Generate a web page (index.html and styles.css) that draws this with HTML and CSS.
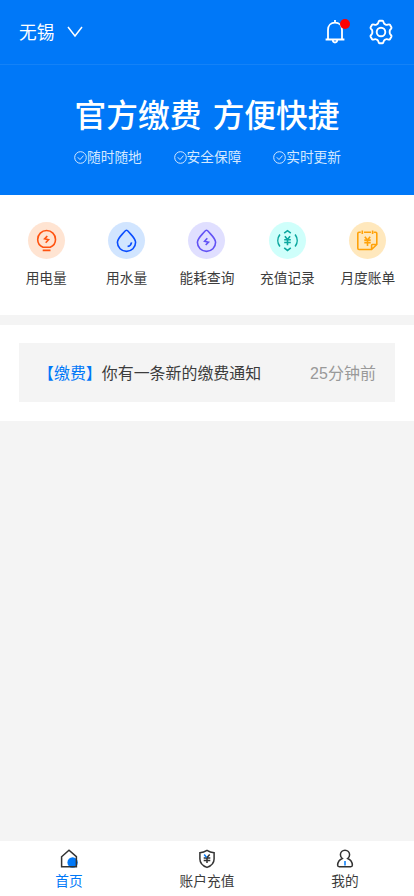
FILE: index.html
```html
<!DOCTYPE html>
<html lang="zh-CN">
<head>
<meta charset="utf-8">
<meta name="viewport" content="width=device-width, initial-scale=1">
<title>首页</title>
<link rel="stylesheet" href="styles.css">
</head>
<body>
<div class="page">
  <header class="topbar">
    <div class="city">无锡
      <svg class="chevron" width="16" height="12" viewBox="0 0 16 12"><path d="M1 1l7 9 7-9"/></svg>
    </div>
    <div class="actions">
      <div class="bell">
        <svg width="20" height="26" viewBox="0 0 20 26"><path d="M10 1v3M3 20.400V11c0-4.500 3-7.300 7-7.300s7 2.800 7 7.300v9.400M.6 20.500h18.800M7.700 21c.2 1.800 1 2.500 2.300 2.500s2.100-.7 2.300-2.500"/></svg>
        <span class="dot"></span>
      </div>
      <svg class="gear" width="24" height="26" viewBox="0 0 24 26"><path d="M8.600 4.900C9.500 4.500 9.400 1.700 10.500 1.700h3c1.100 0 1 2.800 1.900 3.200l1.500.9c.9.600 3.200-1.100 3.900-.2l1.700 2.900c.6 1.100-1.900 2.200-1.800 3.400v2.200c-.1 1.200 2.400 2.300 1.800 3.400l-1.700 2.900c-.7.900-3-.8-3.900-.2l-1.500.9c-.9.400-.8 3.200-1.900 3.200h-3c-1.100 0-1-2.800-1.900-3.200l-1.500-.9c-.9-.6-3.200 1.100-3.900.2l-1.700-2.900c-.6-1.100 1.900-2.200 1.800-3.400v-2.200c.1-1.200-2.400-2.300-1.800-3.400l1.700-2.900c.7-.9 3 .8 3.900.2z"/><circle cx="12" cy="13" r="4.300"/></svg>
    </div>
  </header>

  <section class="banner">
    <h1>官方缴费 方便快捷</h1>
    <ul class="features">
      <li><svg width="13" height="13" viewBox="0 0 13 13"><circle cx="6.500" cy="6.500" r="5.800"/><path d="M3.800 6.300l2.200 2.300 3.500-4"/></svg>随时随地</li>
      <li><svg width="13" height="13" viewBox="0 0 13 13"><circle cx="6.500" cy="6.500" r="5.800"/><path d="M3.800 6.300l2.200 2.300 3.500-4"/></svg>安全保障</li>
      <li><svg width="13" height="13" viewBox="0 0 13 13"><circle cx="6.500" cy="6.500" r="5.800"/><path d="M3.800 6.300l2.200 2.300 3.500-4"/></svg>实时更新</li>
    </ul>
  </section>

  <nav class="menu">
    <a class="item"><span class="disc power"><svg width="37" height="37" viewBox="0 0 37 37"><path d="M15 25.200c-3.200-1.400-5.300-4.200-5.300-7.800a8.900 8.900 0 0 1 17.800 0c0 3.600-2.100 6.400-5.300 7.800zM14.700 28.400h7.800"/><path d="M19.300 14l-2.700 2.900 3.900.9-2.800 2.900"/></svg></span>用电量</a>
    <a class="item"><span class="disc water"><svg width="37" height="37" viewBox="0 0 37 37"><path d="M18.500 8.300c.7 0 1.400.6 2.100 1.500 3.400 3.900 7 6.800 7 10.500a9.100 9.100 0 0 1-18.200 0c0-3.700 3.600-6.600 7-10.500.7-.9 1.400-1.500 2.100-1.500zM23.600 20.300c-.4 2.300-1.700 3.700-4 4.300"/></svg></span>用水量</a>
    <a class="item"><span class="disc usage"><svg width="37" height="37" viewBox="0 0 37 37"><path d="M18.500 8.300c.7 0 1.400.6 2.100 1.500 3.400 3.900 7 6.800 7 10.500a9.100 9.100 0 0 1-18.200 0c0-3.700 3.600-6.600 7-10.500.7-.9 1.400-1.500 2.100-1.500z"/><path d="M19.300 16.300l-2.700 2.900 3.900.9-2.800 2.900"/></svg></span>能耗查询</a>
    <a class="item"><span class="disc record"><svg width="37" height="37" viewBox="0 0 37 37"><path d="M10.900 12.500c-2.700 3.600-2.700 8.500 0 12.100M26.100 12.500c2.700 3.600 2.700 8.500 0 12.100M15.200 11.200l3.300-2.500 3.300 2.500M15.200 25.900l3.300 2.500 3.300-2.500"/><path d="M15.900 14.300l2.600 3.200 2.600-3.200M15.200 17.700h6.600M15.200 20.500h6.600M18.500 17.500v5.800"/></svg></span>充值记录</a>
    <a class="item"><span class="disc bill"><svg width="37" height="37" viewBox="0 0 37 37"><path d="M11.800 10.300H10c-.8 0-1.200.4-1.200 1.200v14.800c0 .8.4 1.200 1.200 1.200h12.600l5.200-5V11.500c0-.8-.4-1.200-1.200-1.200h-1.800M15 10.300h7M13.300 8.500v3.600M23.600 8.500v3.600M22.600 27.500v-4.300c0-.5.200-.7.700-.7h4.500"/><path d="M15.800 14.700l2.700 3.200 2.700-3.200M15.300 18.100h6.400M15.300 20.600h6.400M18.500 17.900v6"/></svg></span>月度账单</a>
  </nav>

  <section class="notices">
    <div class="notice">
      <p><span class="tag">【缴费】</span>你有一条新的缴费通知</p>
      <time>25分钟前</time>
    </div>
  </section>

  <nav class="tabs">
    <a class="tab active"><svg width="20" height="20" viewBox="0 0 20 20"><circle class="blue" cx="13.600" cy="13.500" r="5.200"/><path d="M2.600 7.700L10 1.300l7.400 6.400v10H2.600z"/></svg>首页</a>
    <a class="tab"><svg width="20" height="20" viewBox="0 0 20 20"><path d="M10 1.300c2.300 1.400 4.500 2.100 7.100 2.400v6.200c0 4-3.200 7-7.100 8.500-3.900-1.500-7.100-4.500-7.100-8.500V3.700C5.500 3.400 7.700 2.700 10 1.300z"/><path d="M10 8.500l2.700-2.900M6.700 9h6.600M6.700 11.600h6.600M10 8.800v5.300"/><path class="accent" d="M7.200 5.600L9.600 8.400"/></svg>账户充值</a>
    <a class="tab"><svg width="20" height="20" viewBox="0 0 20 20"><path d="M7.300 9.500A4.600 4.600 0 0 1 5.400 5.800a4.600 4.600 0 0 1 9.200 0 4.600 4.600 0 0 1-1.900 3.700c2.800 1.200 4.500 3.500 4.700 6.600 0 1.200-.5 1.700-1.600 1.700H4.200c-1.100 0-1.600-.5-1.600-1.700.2-3.100 1.900-5.400 4.700-6.600z"/><path class="accent" d="M10 12v4.400"/></svg>我的</a>
  </nav>
</div>
</body>
</html>
```
FILE: styles.css
```css
* { box-sizing: border-box; }
body {
  margin: 0;
  font-family: "Liberation Sans", "Noto Sans CJK SC", sans-serif;
  color: #3c3c3c;
  background: #f4f4f4;
}
svg { display: block; fill: none; stroke: currentColor; flex: none; }
h1, p, ul { margin: 0; padding: 0; }
.page { min-height: 100vh; display: flex; flex-direction: column; }

.topbar {
  height: 65px;
  padding: 0 21px 0 19px;
  display: flex;
  align-items: center;
  justify-content: space-between;
  background: #0078f8;
  border-bottom: 1px solid #1482f7;
  color: #fff;
}
.city { display: flex; align-items: center; gap: 13px; padding-top: 2px; font-size: 17.700px; line-height: 26px; }
.chevron { stroke-width: 1.500; margin-top: -2px; }
.actions { display: flex; align-items: center; gap: 24px; }
.bell { position: relative; stroke-width: 1.800; }
.gear { stroke-width: 1.900; }
.dot {
  position: absolute;
  top: 0;
  right: -5px;
  width: 10px;
  height: 10px;
  border-radius: 50%;
  background: #f00;
}

.banner {
  height: 129.500px;
  padding-top: 27px;
  background: #0078f8;
  color: #fff;
}
h1 { font-size: 31.700px; line-height: 48px; font-weight: 500; text-align: center; word-spacing: 2.500px; }
.features {
  list-style: none;
  display: flex;
  justify-content: space-between;
  padding: 8px 73px 0 74px;
  font-size: 13.700px;
  line-height: 20px;
  color: #d4e8ff;
}
.features li { display: flex; align-items: center; }
.features svg { stroke-width: 1; margin-top: -1px; }

.menu {
  height: 120.500px;
  padding: 27px 6px 0;
  display: grid;
  grid-template-columns: repeat(5, 1fr);
  background: #fff;
}
.item { display: flex; flex-direction: column; align-items: center; gap: 10px; font-size: 13.700px; line-height: 20px; white-space: nowrap; }
.disc { width: 37px; height: 37px; border-radius: 50%; stroke-width: 1.600; }
.power { background: #ffe4d2; color: #ff5310; }
.water { background: #d1e5ff; color: #0a4dff; }
.usage { background: #e0dfff; color: #6252f5; }
.record { background: #cffffb; color: #0ca79f; }
.bill { background: #ffe8bd; color: #ffa20a; }

.notices { margin-top: 9.500px; padding: 18.500px 19px; background: #fff; }
.notice {
  height: 59px;
  padding: 2px 19px 0;
  display: flex;
  align-items: center;
  justify-content: space-between;
  background: #f4f4f4;
  font-size: 15.950px;
  line-height: 24px;
}
.tag { color: #0078f8; }
.notice time { color: #999; letter-spacing: .1px; }

.tabs {
  height: 55.500px;
  margin-top: auto;
  padding-top: 8px;
  display: grid;
  grid-template-columns: repeat(3, 1fr);
  background: #fff;
}
.tab { display: flex; flex-direction: column; align-items: center; gap: 3px; font-size: 13.700px; line-height: 20px; }
.tab svg { color: #333; stroke-width: 1.500; }
.tab .blue { fill: #0078f8; stroke: none; }
.tab .accent { stroke: #0078f8; }
.active { color: #0078f8; }
```
